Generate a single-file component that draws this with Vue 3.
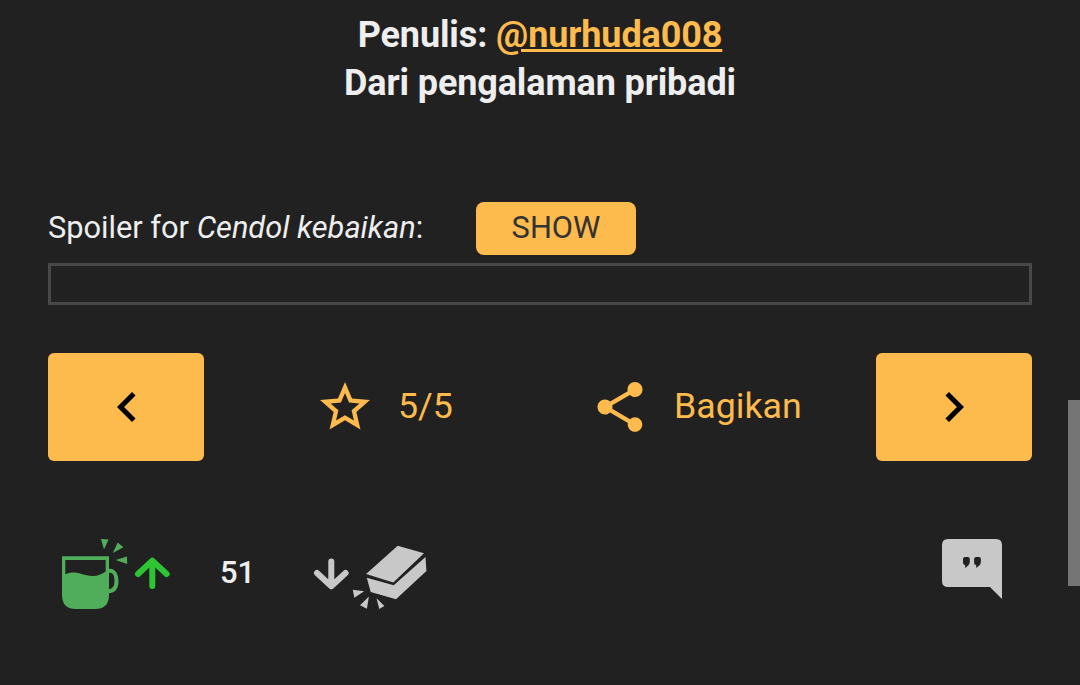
<script setup>
import { ref } from "vue";

const author = ref("@nurhuda008");
const spoilerTitle = ref("Cendol kebaikan");
const rating = ref("5/5");
const votes = ref(51);
const opened = ref(false);
</script>

<template>
    <div class="post">
        <div class="credit">
            <div>Penulis: <a class="author">{{ author }}</a></div>
            <div>Dari pengalaman pribadi</div>
        </div>

        <div class="spoilerHead">
            <span class="spoilerText">Spoiler for <i>{{ spoilerTitle }}</i>:</span>
            <button class="showBtn" @click="opened = !opened">SHOW</button>
        </div>
        <div class="spoilerBox"></div>

        <div class="nav">
            <button class="navBtn prev">
                <svg class="icon" viewBox="0 0 24 24">
                    <path d="M15.41 7.41L14 6l-6 6 6 6 1.41-1.41L10.83 12z" />
                </svg>
            </button>
            <div class="action rate">
                <svg class="icon star" viewBox="0 0 24 24">
                    <path
                        d="M22 9.24l-7.19-.62L12 2 9.19 8.63 2 9.24l5.46 4.73L5.82 21 12 17.27 18.18 21l-1.63-7.03L22 9.24zM12 15.25l-3.58 2.16.95-4.07-3.16-2.74 4.17-.36L12 6.4l1.62 3.84 4.17.36-3.16 2.74.95 4.07L12 15.25z"
                    />
                </svg>
                <span>{{ rating }}</span>
            </div>
            <div class="action share">
                <svg class="icon" viewBox="0 0 24 24">
                    <path
                        d="M18 16.08c-.76 0-1.44.3-1.96.77L8.91 12.7c.05-.23.09-.46.09-.7s-.04-.47-.09-.7l7.05-4.11c.54.5 1.25.81 2.04.81 1.66 0 3-1.34 3-3s-1.34-3-3-3-3 1.34-3 3c0 .24.04.47.09.7L8.04 9.81C7.5 9.31 6.79 9 6 9c-1.66 0-3 1.34-3 3s1.34 3 3 3c.79 0 1.5-.31 2.04-.81l7.12 4.16c-.05.21-.08.43-.08.65 0 1.61 1.31 2.92 2.92 2.92s2.92-1.31 2.92-2.92-1.31-2.92-2.92-2.92z"
                    />
                </svg>
                <span>Bagikan</span>
            </div>
            <button class="navBtn next">
                <svg class="icon" viewBox="0 0 24 24">
                    <path d="M10 6L8.59 7.41 13.17 12l-4.58 4.59L10 18l6-6z" />
                </svg>
            </button>
        </div>

        <div class="votes">
            <svg class="mug" width="66" height="70" viewBox="0 0 66 70">
                <path
                    fill-rule="evenodd"
                    d="M0 17.3H47V56Q47 70 33 70H14Q0 70 0 56ZM3.3 21V35.3C7 33.8 12 33 17 34.2C22 35.3 26 37.2 32 37C37 36.8 41 34.5 43.7 32.6V21Z"
                />
                <path class="handle" d="M46 31.8H48C52 31.8 54.5 36 54.5 42C54.5 48 52 52.3 46 52.3" />
                <path d="M39 0L46.6 .4L42 10.6ZM55.7 3.6L61.4 8.3L50.8 14ZM65 17.4L65.2 25L53.6 21Z" />
            </svg>
            <svg class="up" width="36" height="33" viewBox="0 0 36 33">
                <path d="M18.3 29V5M4 17L18.3 3.6L32.6 17" />
            </svg>
            <span class="count">{{ votes }}</span>
            <svg class="down" width="36" height="33" viewBox="0 0 36 33">
                <path d="M18.3 3.5V27M4 15L18.3 28.2L32.6 15" />
            </svg>
            <svg class="brick" width="75" height="65" viewBox="0 0 75 65">
                <path d="M44.7 .8L71 8.3L40.3 37.5L13.1 29Z" />
                <path d="M13.8 32.7L40.7 40.3L72.5 12L73.4 26L43 54.2L17.7 46.9Z" />
                <path d="M-.2 44.7L11.2 46.3L1.3 52.7ZM15.9 51.5L7 60.2L13.9 63.7ZM23.5 53.2L31.4 61L26.3 64Z" />
            </svg>
            <svg class="quote" width="60" height="60" viewBox="0 0 60 60">
                <path
                    fill-rule="evenodd"
                    d="M6 0H54Q60 0 60 6V60L48 48H6Q0 48 0 42V6Q0 0 6 0ZM23 18Q21 18 21 20V23.7Q21 25.9 23.1 25.9V29L26.2 26.6Q27.8 25 27.8 22.5V20Q27.8 18 25.8 18ZM34.1 18Q32.1 18 32.1 20V23.7Q32.1 25.9 34.2 25.9V29L37.3 26.6Q38.9 25 38.9 22.5V20Q38.9 18 36.9 18Z"
                />
            </svg>
        </div>

        <div class="scrollThumb"></div>
    </div>
</template>

<style>
body {
    background: #212121;
}
</style>

<style scoped>
.post {
    position: relative;
    box-sizing: border-box;
    width: 1080px;
    height: 685px;
    padding: 11px 48px 0;
    overflow: hidden;
    background: #212121;
    color: #eeeeee;
    font-family: Roboto, "Liberation Sans", sans-serif;
}
button {
    padding: 0;
    border: none;
    font-family: inherit;
    background: #fdba4d;
}
svg {
    display: block;
    flex: none;
}
.credit {
    font-size: 36px;
    line-height: 48px;
    font-weight: 700;
    letter-spacing: -0.12px;
    text-align: center;
}
.author {
    color: #fdba4d;
    text-decoration: underline;
}
.spoilerHead {
    display: flex;
    align-items: center;
    height: 53px;
    margin-top: 95px;
    font-size: 30.8px;
}
.spoilerText {
    width: 428px;
    line-height: 50px;
    padding-bottom: 1px;
    letter-spacing: -0.02px;
    white-space: nowrap;
}
.showBtn {
    width: 160px;
    height: 53px;
    padding-bottom: 3px;
    border-radius: 8px;
    font-size: 30.8px;
    color: #333333;
}
.spoilerBox {
    box-sizing: border-box;
    height: 42px;
    margin-top: 8px;
    border: 3px solid #484848;
}
.nav {
    display: flex;
    align-items: center;
    height: 108px;
    margin-top: 48px;
}
.navBtn {
    display: flex;
    align-items: center;
    justify-content: center;
    width: 156px;
    height: 108px;
    border-radius: 6px;
    color: #000000;
}
.prev {
    box-sizing: border-box;
    padding-left: 2px;
}
.icon {
    width: 60px;
    height: 60px;
    fill: currentColor;
}
.action {
    display: flex;
    align-items: center;
    gap: 24px;
    font-size: 35.75px;
    color: #fdba4d;
}
.action span {
    padding-bottom: 2px;
}
.rate {
    width: 250px;
    margin-left: 111px;
    gap: 23px;
}
.share {
    margin-left: 25px;
}
.next {
    margin-left: auto;
}
.votes {
    display: flex;
    align-items: flex-start;
    margin: 78px 30px 0 14px;
}
.mug {
    fill: #50ae5b;
    overflow: visible;
}
.handle {
    fill: none;
    stroke: #50ae5b;
    stroke-width: 4;
}
.up,
.down {
    fill: none;
    stroke-width: 6;
    stroke-linecap: round;
    stroke-linejoin: round;
}
.up {
    margin: 18px 0 0 6px;
    stroke: #2dc534;
}
.count {
    width: 93px;
    margin: 16px 0 0 50px;
    font-size: 31px;
    line-height: 36px;
    font-weight: 500;
}
.down {
    margin-top: 19px;
    stroke: #c8c8c8;
}
.brick {
    margin: 6px 0 0 4px;
    fill: #c8c8c8;
    overflow: visible;
}
.quote {
    margin-left: auto;
    fill: #c8c8c8;
}
.scrollThumb {
    position: absolute;
    right: 0;
    top: 400px;
    width: 12px;
    height: 186px;
    background: #757575;
}
</style>
